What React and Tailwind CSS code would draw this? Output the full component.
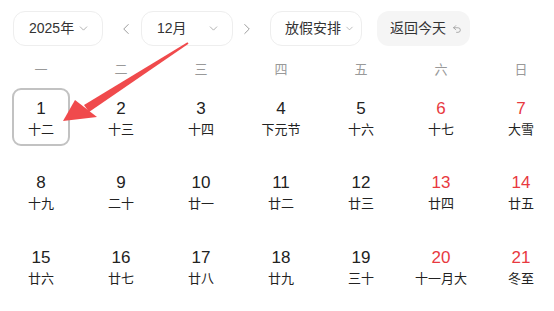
import { ChevronDown, ChevronLeft, ChevronRight, Undo2 } from 'lucide-react'

const WEEK = ['一', '二', '三', '四', '五', '六', '日']

const DAYS = [
  { d: 1, l: '十二' }, { d: 2, l: '十三' }, { d: 3, l: '十四' }, { d: 4, l: '下元节' },
  { d: 5, l: '十六' }, { d: 6, l: '十七', red: true }, { d: 7, l: '大雪', red: true },
  { d: 8, l: '十九' }, { d: 9, l: '二十' }, { d: 10, l: '廿一' }, { d: 11, l: '廿二' },
  { d: 12, l: '廿三' }, { d: 13, l: '廿四', red: true }, { d: 14, l: '廿五', red: true },
  { d: 15, l: '廿六' }, { d: 16, l: '廿七' }, { d: 17, l: '廿八' }, { d: 18, l: '廿九' },
  { d: 19, l: '三十' }, { d: 20, l: '十一月大', red: true }, { d: 21, l: '冬至', red: true },
]

const font = { fontFamily: '"Liberation Sans", "Noto Sans CJK SC", sans-serif' }

export default function App() {
  return (
    <div className="relative w-[554px] h-[311px] overflow-hidden bg-white" style={font}>
      {/* toolbar */}
      <div className="flex items-center pl-[13px] pt-[11px]">
        <div className="flex items-center justify-between w-[90px] h-[35px] pl-[15px] pr-[12px] border border-[#eeeeee] rounded-[12px] text-[14px] text-[#333]">
          <span>2025年</span>
          <ChevronDown size={13} strokeWidth={1.4} className="text-[#999]" />
        </div>
        <ChevronLeft size={18} strokeWidth={1.3} className="ml-[14px] text-[#999]" />
        <div className="ml-[6px] flex items-center justify-between w-[92px] h-[35px] pl-[15px] pr-[12px] border border-[#eeeeee] rounded-[12px] text-[14px] text-[#333]">
          <span>12月</span>
          <ChevronDown size={13} strokeWidth={1.4} className="text-[#999]" />
        </div>
        <ChevronRight size={18} strokeWidth={1.3} className="ml-[5px] text-[#999]" />
        <div className="ml-[14px] flex items-center gap-[3px] w-[92px] h-[35px] pl-[14px] border border-[#eeeeee] rounded-[12px] text-[14px] text-[#333]">
          <span>放假安排</span>
          <ChevronDown size={11} strokeWidth={1.4} className="text-[#999]" />
        </div>
        <div className="ml-[15px] flex items-center gap-[6px] w-[93px] h-[35px] pl-[13px] rounded-[12px] bg-[#f5f5f5] text-[14px] text-[#333]">
          <span>返回今天</span>
          <Undo2 size={10} strokeWidth={1.6} className="text-[#888]" />
        </div>
      </div>

      {/* weekday header */}
      <div className="grid grid-cols-[repeat(7,80px)] pl-[1px] mt-[14px] h-[18px] items-center">
        {WEEK.map(w => (
          <div key={w} className="text-center text-[13px] text-[#999]">{w}</div>
        ))}
      </div>

      {/* days */}
      <div className="grid grid-cols-[repeat(7,80px)] pl-[1px] mt-[10px] gap-y-[16.5px]">
        {DAYS.map(day => (
          <div key={day.d} className="flex justify-center">
            <div
              className={`flex flex-col items-center justify-center pt-[3px] w-[58px] h-[58px] rounded-[9px] border-2 ${day.d === 1 ? 'border-[#c2c2c2]' : 'border-transparent'}`}
            >
              <span className={`text-[17px] leading-[20px] ${day.red ? 'text-[#e8393f]' : 'text-[#222]'}`}>{day.d}</span>
              <span className="text-[13px] leading-[18px] mt-[2px] whitespace-nowrap text-[#222]">{day.l}</span>
            </div>
          </div>
        ))}
      </div>

      {/* annotation arrow */}
      <svg className="absolute left-0 top-0 pointer-events-none" width="554" height="311">
        <polygon points="188.5,43.8 187.5,42.2 84,105 89,112" fill="#f04a4c" />
        <polygon points="63,121 75,100 97,117" fill="#f04a4c" />
      </svg>
    </div>
  )
}
